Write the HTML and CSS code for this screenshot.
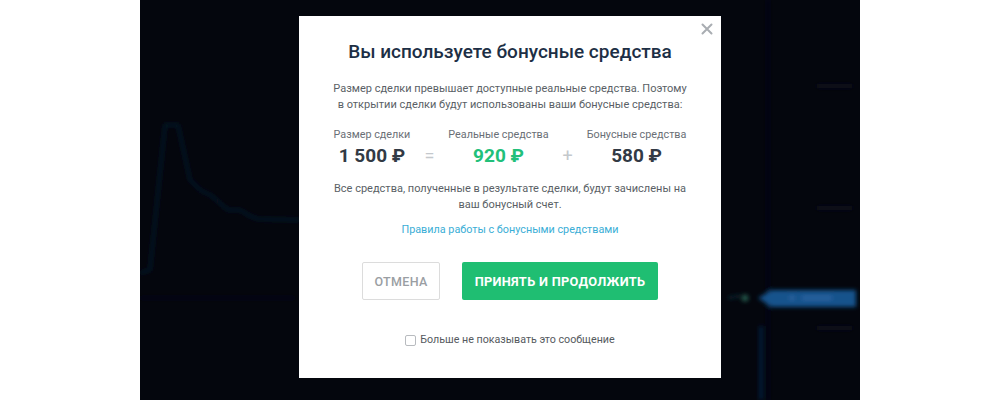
FILE: index.html
```html
<!DOCTYPE html>
<html lang="ru">
<head>
<meta charset="utf-8">
<title>Бонусные средства</title>
<link rel="stylesheet" href="styles.css">
</head>
<body>
<div class="stage">
  <svg class="chart" width="720" height="400" viewBox="0 0 720 400">
    <defs>
      <filter id="blur" x="-20%" y="-20%" width="140%" height="140%"><feGaussianBlur stdDeviation="2"/></filter>
    </defs>
    <g filter="url(#blur)">
      <line x1="628" y1="0" x2="628" y2="400" stroke="#080d16" stroke-width="3"/>
      <line x1="0" y1="298" x2="155" y2="298" stroke="#07111c" stroke-width="2"/>
      <polyline points="0,273 10,270 25,125 38,125 50,180 60,190 72,196 82,205 88,210 100,210 110,216 118,219 160,220" fill="none" stroke="#0a1a2e" stroke-width="2.5"/>
      <line x1="588" y1="298" x2="600" y2="296" stroke="#12303c" stroke-width="2"/>
      <circle cx="605" cy="298" r="3.5" fill="#22584c"/>
      <polygon points="618,298 632,290 716,290 716,307 632,307" fill="#18528c"/>
      <rect x="650" y="296" width="4" height="4" fill="#2e68a4"/>
      <rect x="662" y="296" width="30" height="4" fill="#2a62a0"/>
      <line x1="621" y1="326" x2="621" y2="400" stroke="#0b2746" stroke-width="3"/>
      <rect x="677" y="84" width="35" height="4" fill="#07101a"/>
      <rect x="677" y="206" width="35" height="4" fill="#07101a"/>
      <rect x="677" y="326" width="35" height="4" fill="#07101a"/>
    </g>
  </svg>

  <div class="modal">
    <button class="close" type="button" aria-label="Закрыть">
      <svg width="12" height="12" viewBox="0 0 12 12"><path d="M1.5 1.5 L10.5 10.5 M10.5 1.5 L1.5 10.5" stroke="#a9adb2" stroke-width="2" stroke-linecap="round"/></svg>
    </button>
    <h1 class="title">Вы используете бонусные средства</h1>
    <p class="text">Размер сделки превышает доступные реальные средства. Поэтому<br>в открытии сделки будут использованы ваши бонусные средства:</p>
    <div class="sum">
      <div class="col">
        <div class="label">Размер сделки</div>
        <div class="amount">1 500 ₽</div>
      </div>
      <div class="op">=</div>
      <div class="col">
        <div class="label">Реальные средства</div>
        <div class="amount green">920 ₽</div>
      </div>
      <div class="op">+</div>
      <div class="col">
        <div class="label">Бонусные средства</div>
        <div class="amount">580 ₽</div>
      </div>
    </div>
    <p class="text note">Все средства, полученные в результате сделки, будут зачислены на<br>ваш бонусный счет.</p>
    <a class="link" href="#">Правила работы с бонусными средствами</a>
    <div class="actions">
      <button class="btn cancel" type="button">Отмена</button>
      <button class="btn accept" type="button">Принять и продолжить</button>
    </div>
    <label class="check"><span class="box"></span>Больше не показывать это сообщение</label>
  </div>
</div>
</body>
</html>
```
FILE: styles.css
```css
html, body {
  margin: 0;
  padding: 0;
  background: #ffffff;
}
body {
  font-family: Roboto, "Noto Sans", sans-serif;
}
.stage {
  position: relative;
  width: 720px;
  height: 400px;
  margin: 0 auto;
  background: #04060d;
  overflow: hidden;
}
.chart {
  position: absolute;
  left: 0;
  top: 0;
}
.modal {
  position: absolute;
  left: 159px;
  top: 16px;
  width: 422px;
  height: 362px;
  box-sizing: border-box;
  background: #ffffff;
  display: flex;
  flex-direction: column;
  align-items: center;
  padding-top: 24px;
}
.close {
  position: absolute;
  right: 7px;
  top: 6px;
  width: 14px;
  height: 14px;
  padding: 0;
  border: 0;
  background: none;
  display: flex;
  align-items: center;
  justify-content: center;
}
.title {
  margin: 0;
  font-size: 19px;
  line-height: 24px;
  font-weight: 500;
  color: #1d2f45;
}
.text {
  margin: 17px 0 0;
  font-size: 11px;
  line-height: 16px;
  color: #5a5f66;
  text-align: center;
}
.sum {
  display: flex;
  align-items: flex-end;
  margin-top: 14px;
}
.col {
  display: flex;
  flex-direction: column;
  align-items: center;
}
.label {
  font-size: 10.8px;
  line-height: 16px;
  color: #6a6f76;
}
.amount {
  margin-top: 2px;
  font-size: 19px;
  line-height: 22px;
  font-weight: 700;
  color: #323a45;
}
.amount.green {
  color: #22c07a;
}
.op {
  width: 38px;
  text-align: center;
  font-size: 18px;
  line-height: 22px;
  color: #c4c8cc;
}
.note {
  margin-top: 14px;
}
.link {
  margin-top: 10px;
  font-size: 10.8px;
  line-height: 14px;
  color: #3aaed6;
  text-decoration: none;
}
.actions {
  display: flex;
  gap: 22px;
  margin-top: 25px;
}
.btn {
  font-family: inherit;
  height: 38px;
  border-radius: 2px;
  text-transform: uppercase;
  font-size: 12.8px;
  font-weight: 700;
  letter-spacing: 0.3px;
}
.cancel {
  width: 78px;
  background: #ffffff;
  border: 1px solid #dcdcdc;
  color: #9a9ea3;
  font-weight: 500;
  font-size: 12.5px;
}
.accept {
  width: 196px;
  background: #1fbe72;
  border: 0;
  color: #ffffff;
}
.check {
  display: flex;
  align-items: center;
  gap: 4px;
  margin-top: 33px;
  font-size: 10.7px;
  line-height: 14px;
  color: #555a60;
}
.box {
  width: 9px;
  height: 9px;
  border: 1px solid #b8bbbf;
  border-radius: 2px;
}
```
